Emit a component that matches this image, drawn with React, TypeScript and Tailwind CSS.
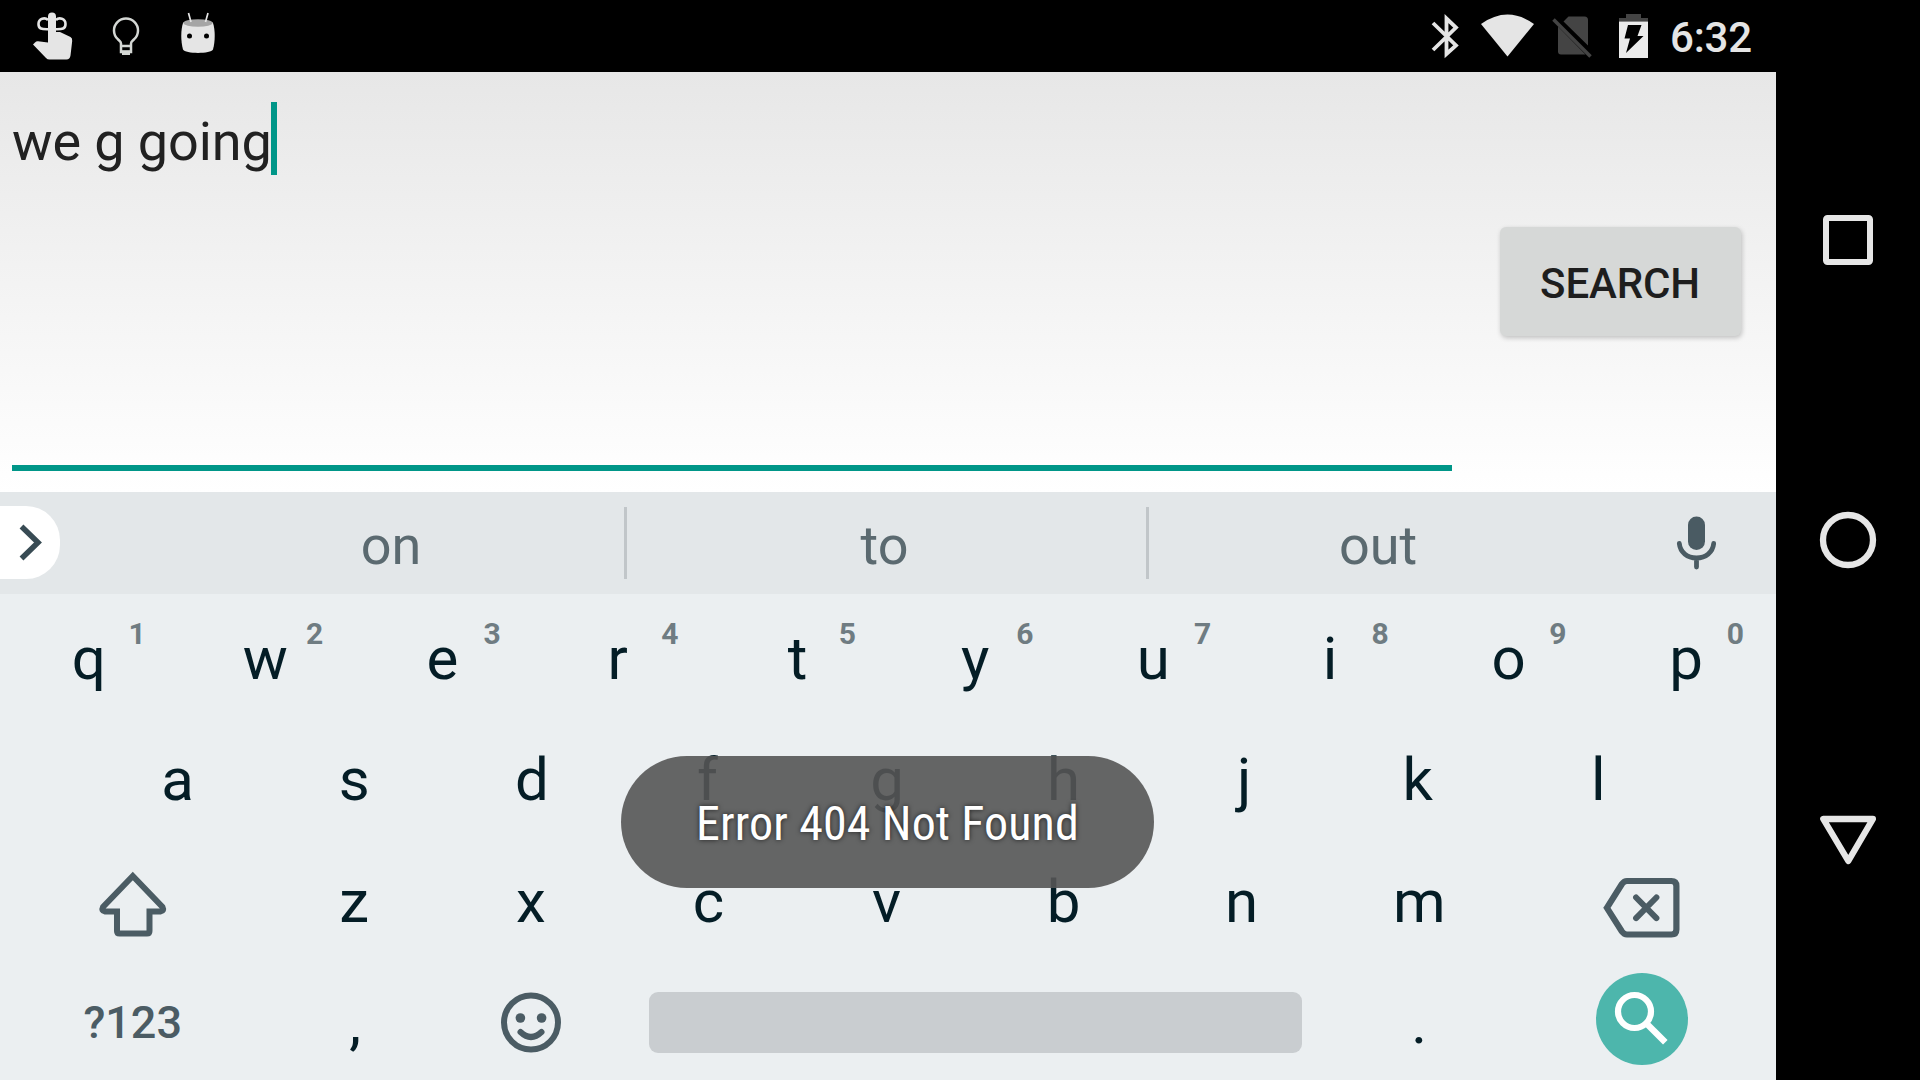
import React from "react";

type Letter = { label: string; nudge?: number };

/* Letters are centred in their key by advance width; the nudge evens out the side bearings. */
const NUMBERED: (Letter & { digit: string })[] = [
  { label: "q", digit: "1" },
  { label: "w", digit: "2", nudge: -1 },
  { label: "e", digit: "3", nudge: -1.5 },
  { label: "r", digit: "4", nudge: -4 },
  { label: "t", digit: "5", nudge: -1.5 },
  { label: "y", digit: "6", nudge: -1.5 },
  { label: "u", digit: "7", nudge: -1 },
  { label: "i", digit: "8", nudge: -2 },
  { label: "o", digit: "9", nudge: -1 },
  { label: "p", digit: "0", nudge: -1 },
];
const HOME: Letter[] = [
  { label: "a" },
  { label: "s", nudge: -1 },
  { label: "d", nudge: -1 },
  { label: "f", nudge: -3 },
  { label: "g", nudge: -1 },
  { label: "h", nudge: -2 },
  { label: "j", nudge: 1 },
  { label: "k", nudge: -3 },
  { label: "l" },
];
const BOTTOM: Letter[] = [
  { label: "z", nudge: -1 },
  { label: "x", nudge: -2 },
  { label: "c", nudge: -2 },
  { label: "v", nudge: -1.5 },
  { label: "b", nudge: -2 },
  { label: "n", nudge: -1.5 },
  { label: "m", nudge: -1.5 },
];

function StatusBar() {
  return (
    <header className="flex h-[72px] shrink-0 items-center justify-between bg-black">
      <svg width="240" height="72" viewBox="0 0 240 72" fill="#e5e5e5">
        <path d="M48 16.500a4 4 0 0 1 8 0V32h4l10.500 5q2 1 1.700 4L70.500 55.500q-.6 4-4 4H49.500q-2 0-3.500-1.500L33 44.500l2-2q1.500-1.500 3-1.200L48 42.500Z" />
        <path d="M48 20c-3-3-9.500-1.500-9.500 4s4 5.200 9.500 5.200M56 20c3-3 9.500-1.500 9.500 4s-4 5.200-9.500 5.200" fill="none" stroke="#e5e5e5" strokeWidth="2.600" />
        <path d="M121 52V43.500c0-2-1.500-2.500-3.200-4.300a12 12 0 1 1 16.400 0c-1.700 1.800-3.200 2.300-3.200 4.300V52Z" fill="none" stroke="#d4d7d4" strokeWidth="2.500" />
        <path d="M120 46h12M120 51.500h12" stroke="#d4d7d4" strokeWidth="2.500" />
        <path d="M122 51h8v4h-8z" fill="#d4d7d4" />
        <path d="M183 23c2-4 28-4 30 0 2.300 7 2.300 18 0 26.500-2 4.500-28 4.500-30 0-2.300-8.500-2.300-19.500 0-26.500Z" />
        <ellipse cx="198" cy="23" rx="14.500" ry="3.800" fill="#a5a5a5" />
        <path d="m188.500 13 2.500 9M208 13l-2.500 9" stroke="#e5e5e5" strokeWidth="1.700" />
        <circle cx="189.500" cy="36" r="2.500" fill="#000" />
        <circle cx="206.500" cy="36" r="2.500" fill="#000" />
      </svg>
      <div className="flex items-center">
        <svg width="250" height="72" viewBox="1420 0 250 72">
          <path d="m1433 23 23 22.500L1446.500 54V18.500L1456 27.500 1433 50" fill="none" stroke="#e5e5e5" strokeWidth="3.800" />
          <path d="M1481 24q26.500-19 53 0L1507.500 56.500Z" fill="#e5e5e5" />
          <path d="M1563.500 21.500 1568.500 16.500h16q3.500 0 3.500 3.500v25.500ZM1558 26.500 1585.500 54.500H1561q-3 0-3-3Z" fill="#444" />
          <path d="m1553.500 19.500 37 37" stroke="#444" strokeWidth="3.600" />
          <path d="M1619 21.500v-3.500h7v-4h15v4h7v3.500Z" fill="#444" />
          <path d="M1619 21.500h29V58h-29Z" fill="#ebebeb" />
          <path d="M1628 25h13.500l-4 11h6L1626 53l4-14.500h-5.500Z" fill="#000" />
        </svg>
        <span className="w-[106px] pt-[3px] text-[42px] leading-[72px] font-medium tracking-[-0.200px] text-[#e5e5e5]">6:32</span>
      </div>
    </header>
  );
}

function SearchForm() {
  return (
    <section className="flex h-[420px] shrink-0 items-start bg-linear-to-b from-[#e7e7e7] to-white pl-3">
      <div className="flex h-[399px] w-[1440px] items-start border-b-6 border-[#009688] pt-[30px]">
        <span className="w-[259px] pt-[2px] text-[54px] leading-[76px] tracking-[-0.100px] whitespace-nowrap text-[#212121]">we g going</span>
        <span className="h-[73px] w-[6px] bg-[#009688]" />
      </div>
      <button className="mt-[155px] ml-12 h-[109px] w-[241px] rounded-[6px] bg-[#d6d8d7] pt-[4px] pr-[1px] text-[42px] font-medium tracking-[-0.150px] text-[#1e1e1e] shadow-[1px_2px_5px_rgba(0,0,0,0.22)]">
        SEARCH
      </button>
    </section>
  );
}

function Suggestions() {
  return (
    <div className="flex h-[102px] shrink-0 items-center bg-[#e3e7e9] pb-[1px] text-[54px] text-[#5b6a70]">
      <div className="flex h-[73px] w-[60px] items-center justify-center rounded-r-[34px] bg-white">
        <svg width="60" height="73" viewBox="0 0 60 73" fill="none">
          <path d="m21.500 20.500 16.500 16-16.500 16" stroke="#384b54" strokeWidth="5.500" />
        </svg>
      </div>
      <div className="w-[564px] pt-[5px] pl-[98px] text-center">on</div>
      <div className="h-[72px] w-[3px] bg-[#c1c6c9]" />
      <div className="w-[519px] pt-[5px] pr-1 text-center">to</div>
      <div className="h-[72px] w-[3px] bg-[#c1c6c9]" />
      <div className="w-[460px] pt-[5px] pr-[2px] text-center">out</div>
      <svg className="ml-[64px]" width="48" height="72" viewBox="1673 506.500 48 72">
        <rect x="1688" y="516" width="17" height="33.500" rx="8.500" fill="#4a5b63" />
        <path d="M1679.300 543c1 9 8 14.500 17.200 14.500s16.200-5.500 17.200-14.500M1696.500 558v8.500" fill="none" stroke="#4a5b63" strokeWidth="4.800" strokeLinecap="round" />
      </svg>
    </div>
  );
}

function Key({ label, nudge = 0 }: Letter) {
  return (
    <div className="w-[177.600px] text-center text-[60px] leading-[121.500px]">
      <span className="inline-block" style={{ transform: `translateX(${nudge}px)` }}>{label}</span>
    </div>
  );
}

function Keyboard() {
  return (
    <div className="flex h-[486px] shrink-0 flex-col bg-[#ebeff1] text-[#041d26]">
      <div className="flex h-[121.500px] pt-[4px]">
        {NUMBERED.map(({ label, digit, nudge }) => (
          <div key={label} className="relative">
            <Key label={label} nudge={nudge} />
            <span className="absolute top-[18px] left-[117px] w-10 text-center text-[30px] leading-[36px] font-bold text-[#6f7c82]">{digit}</span>
          </div>
        ))}
      </div>
      <div className="flex h-[121.500px] justify-center pt-[3px]">
        {HOME.map((key) => <Key key={key.label} {...key} />)}
      </div>
      <div className="flex h-[121.500px] pt-[3.500px]">
        <svg width="266.400" height="121.500" viewBox="0 840.500 266.400 121.500" fill="none">
          <path d="M132.800 875.500 162.500 906.500q2 4-2 4.500H149.500V930.500q0 2.500-2.500 2.500H119.500q-2.500 0-2.500-2.500V911H105q-4-.5-2-4.500Z" stroke="#4b5c64" strokeWidth="6" />
        </svg>
        {BOTTOM.map((key) => <Key key={key.label} {...key} />)}
        <svg width="266.400" height="121.500" viewBox="1509.600 840.500 266.400 121.500" fill="none" stroke="#4b5c64">
          <path d="M1606.500 907.300 1621.500 883.500q2.200-3 5-3H1671q5 0 5 5v43.500q0 5-5 5h-44.500q-2.800 0-5-3Z" strokeWidth="6.200" />
          <path d="m1635.700 897 20.300 20.600M1656 897l-20.300 20.600" strokeWidth="6" strokeLinecap="round" />
        </svg>
      </div>
      <div className="flex h-[121.500px] items-start">
        <div className="w-[266.400px] pt-[6.500px] pr-[1px] text-center text-[45px] leading-[116px] font-medium text-[#4b5c64]">?123</div>
        <div className="pt-[3px]"><Key label="," /></div>
        <svg width="177.600" height="121.500" viewBox="444 958.500 177.600 121.500" fill="none" stroke="#4b5c64">
          <circle cx="531" cy="1022" r="27" strokeWidth="6" />
          <circle cx="520.400" cy="1017.500" r="4.800" fill="#4b5c64" stroke="none" />
          <circle cx="541.600" cy="1017.500" r="4.800" fill="#4b5c64" stroke="none" />
          <path d="M520.500 1031.500q10.500 10 21 0" strokeWidth="6" strokeLinecap="round" />
        </svg>
        <div className="mt-[33.500px] ml-[27.400px] h-[61px] w-[653px] rounded-[9px] bg-[#c9cdd0]" />
        <div className="ml-[28.500px] pt-[3px]"><Key label="." /></div>
        <div className="mt-[14.500px] ml-[88px] size-[92px] rounded-full bg-[#4db6ac]">
          <svg width="92" height="92" viewBox="1596 973 92 92" fill="none" stroke="#fff">
            <circle cx="1634.500" cy="1011.500" r="16.500" strokeWidth="6.200" />
            <path d="m1646 1023 19.300 19.300" strokeWidth="6.400" />
          </svg>
        </div>
      </div>
    </div>
  );
}

function Toast() {
  return (
    <div className="absolute top-[756px] left-[621px] flex h-[132px] w-[533px] items-center justify-center rounded-full bg-[#555555]/90 pt-1">
      <span className="text-[48px] tracking-[0.120px] whitespace-nowrap text-white [font-stretch:75%] [text-shadow:0_0_5px_rgba(0,0,0,0.7)]">Error 404 Not Found</span>
    </div>
  );
}

function NavBar() {
  return (
    <nav className="flex w-[144px] flex-col bg-black">
      <svg width="144" height="1080" viewBox="1776 0 144 1080" fill="none" stroke="#e6e6e6" strokeWidth="6" strokeLinejoin="round">
        <rect x="1826" y="218" width="44" height="44" rx="1.500" />
        <circle cx="1848" cy="540" r="25" strokeWidth="6.300" />
        <path d="M1823.300 819h49.600l-24.600 42Z" strokeWidth="6.300" />
      </svg>
    </nav>
  );
}

export default function App() {
  return (
    <div className="relative flex h-[1080px] w-[1920px] overflow-hidden bg-black font-['Roboto',sans-serif]">
      <main className="flex w-[1776px] flex-col">
        <StatusBar />
        <SearchForm />
        <Suggestions />
        <Keyboard />
      </main>
      <NavBar />
      <Toast />
    </div>
  );
}
